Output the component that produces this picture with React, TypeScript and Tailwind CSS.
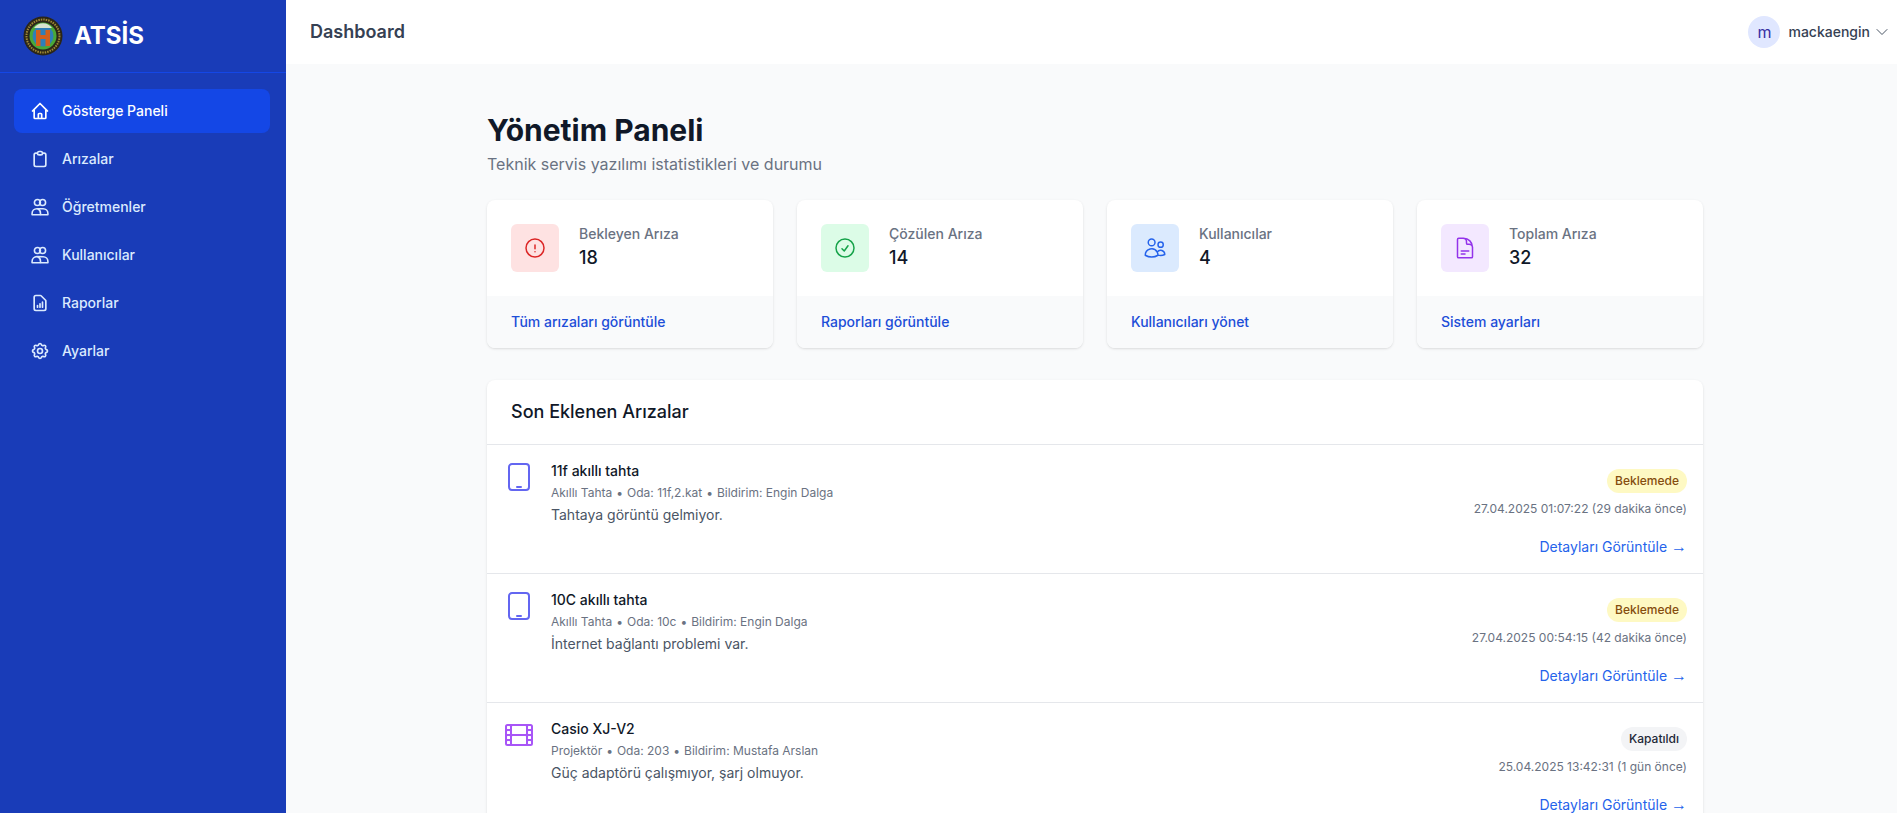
import {
  HiOutlineHome,
  HiOutlineClipboard,
  HiOutlineDocumentReport,
  HiOutlineCog,
} from 'react-icons/hi';
import {
  HiOutlineExclamationCircle,
  HiOutlineCheckCircle,
  HiOutlineUsers,
  HiOutlineDocumentText,
  HiOutlineDeviceTablet,
  HiOutlineFilm,
  HiOutlineChevronDown,
} from 'react-icons/hi2';
import type { ReactNode } from 'react';

const PeopleIcon = () => (
  <svg viewBox="0 0 24 24" fill="none" stroke="currentColor" strokeWidth="1.9" className="w-5 h-5 shrink-0" strokeLinecap="round" strokeLinejoin="round">
    <circle cx="8.9" cy="6.6" r="3.6" />
    <circle cx="15.1" cy="6.6" r="3.6" />
    <path d="M2.5 21.2v-1.4c0-3.2 2.6-5.8 5.8-5.8h7.4c3.2 0 5.8 2.6 5.8 5.8v1.4z" />
    <path d="M12.6 21v-1.6c0-2.4-1.3-4.3-3.2-5.3" />
  </svg>
);

const Logo = () => (
  <svg viewBox="0 0 40 40" className="w-10 h-10 shrink-0">
    <circle cx="20" cy="20" r="19.5" fill="#2b2618" />
    <circle cx="20" cy="20" r="16.5" fill="none" stroke="#a08a35" strokeWidth="2" strokeDasharray="1.5 1" />
    <circle cx="20" cy="20" r="13.5" fill="#4aa838" />
    <circle cx="20" cy="20" r="10.5" fill="#2f7fb8" />
    <path d="M11 12a11 11 0 0 1 18 0z" fill="#d8e4d0" />
    <path d="M13 14h4.5v5h5v-5H27v16h-4.5v-7h-5v7H13z" fill="#d2601c" />
  </svg>
);

const navItems: { label: string; icon: ReactNode; active?: boolean }[] = [
  { label: 'Gösterge Paneli', icon: <HiOutlineHome className="w-5 h-5 shrink-0" />, active: true },
  { label: 'Arızalar', icon: <HiOutlineClipboard className="w-5 h-5 shrink-0" /> },
  { label: 'Öğretmenler', icon: <PeopleIcon /> },
  { label: 'Kullanıcılar', icon: <PeopleIcon /> },
  { label: 'Raporlar', icon: <HiOutlineDocumentReport className="w-5 h-5 shrink-0" /> },
  { label: 'Ayarlar', icon: <HiOutlineCog className="w-5 h-5 shrink-0" /> },
];

const stats = [
  { label: 'Bekleyen Arıza', value: '18', link: 'Tüm arızaları görüntüle', box: 'bg-[#fee2e2] text-[#dc2626]', icon: <HiOutlineExclamationCircle className="w-6 h-6" /> },
  { label: 'Çözülen Arıza', value: '14', link: 'Raporları görüntüle', box: 'bg-[#dcfce7] text-[#16a34a]', icon: <HiOutlineCheckCircle className="w-6 h-6" /> },
  { label: 'Kullanıcılar', value: '4', link: 'Kullanıcıları yönet', box: 'bg-[#dbeafe] text-[#2563eb]', icon: <HiOutlineUsers className="w-6 h-6" /> },
  { label: 'Toplam Arıza', value: '32', link: 'Sistem ayarları', box: 'bg-[#f3e8ff] text-[#9333ea]', icon: <HiOutlineDocumentText className="w-6 h-6" /> },
];

const rows = [
  { title: '11f akıllı tahta', meta: ['Akıllı Tahta', 'Oda: 11f,2.kat', 'Bildirim: Engin Dalga'], desc: 'Tahtaya görüntü gelmiyor.', status: 'Beklemede', date: '27.04.2025 01:07:22 (29 dakika önce)', icon: <HiOutlineDeviceTablet className="w-8 h-8 shrink-0 text-[#6366f1]" /> },
  { title: '10C akıllı tahta', meta: ['Akıllı Tahta', 'Oda: 10c', 'Bildirim: Engin Dalga'], desc: 'İnternet bağlantı problemi var.', status: 'Beklemede', date: '27.04.2025 00:54:15 (42 dakika önce)', icon: <HiOutlineDeviceTablet className="w-8 h-8 shrink-0 text-[#6366f1]" /> },
  { title: 'Casio XJ-V2', meta: ['Projektör', 'Oda: 203', 'Bildirim: Mustafa Arslan'], desc: 'Güç adaptörü çalışmıyor, şarj olmuyor.', status: 'Kapatıldı', date: '25.04.2025 13:42:31 (1 gün önce)', icon: <HiOutlineFilm className="w-8 h-8 shrink-0 text-[#a855f7]" /> },
];

export default function App() {
  return (
    <div className="flex h-screen overflow-hidden bg-gray-50 font-['Inter',sans-serif]">
      {/* Sidebar */}
      <aside className="w-[286px] shrink-0 bg-blue-800 text-white">
        <div className="h-[73px] border-b border-blue-700 pl-[23px] flex items-center gap-[11px]">
          <Logo />
          <span className="text-2xl font-bold">ATSİS</span>
        </div>
        <nav className="mt-4 pl-[14px] pr-4 space-y-1">
          {navItems.map((item) => (
            <a
              key={item.label}
              className={`flex items-center gap-3 rounded-lg px-4 py-3 text-sm font-medium ${item.active ? 'bg-blue-700 text-white' : 'text-blue-100'}`}
            >
              {item.icon}
              {item.label}
            </a>
          ))}
        </nav>
      </aside>

      <div className="flex-1 min-w-0 flex flex-col">
        {/* Header */}
        <header className="h-16 shrink-0 bg-white flex items-center justify-between pl-6 pr-[7px]">
          <h2 className="text-lg font-semibold text-gray-700">Dashboard</h2>
          <div className="flex items-center">
            <div className="w-8 h-8 rounded-full bg-[#e0e7ff] text-[#3730a3] flex items-center justify-center text-base">m</div>
            <span className="ml-2 text-sm font-medium text-gray-700">mackaengin</span>
            <HiOutlineChevronDown className="ml-1 w-4 h-4 text-gray-600" />
          </div>
        </header>

        {/* Page */}
        <main className="flex-1 overflow-hidden pt-12 pl-[201px]">
          <div className="w-[1216px]">
            <h1 className="text-3xl font-bold text-gray-900">Yönetim Paneli</h1>
            <p className="mt-1 text-gray-500">Teknik servis yazılımı istatistikleri ve durumu</p>

            <div className="mt-6 grid grid-cols-4 gap-6">
              {stats.map((s) => (
                <div key={s.label} className="bg-white rounded-lg shadow overflow-hidden">
                  <div className="p-6 flex items-center">
                    <div className={`w-12 h-12 rounded-md flex items-center justify-center ${s.box}`}>{s.icon}</div>
                    <div className="ml-5">
                      <div className="text-sm font-medium text-gray-500">{s.label}</div>
                      <div className="text-lg font-medium text-gray-900">{s.value}</div>
                    </div>
                  </div>
                  <div className="bg-gray-50 px-6 py-4 text-sm font-medium text-[#1d4ed8]">{s.link}</div>
                </div>
              ))}
            </div>

            <div className="mt-8 bg-white rounded-lg shadow">
              <div className="px-6 py-5 border-b border-gray-200">
                <h3 className="text-lg leading-6 font-medium text-gray-900">Son Eklenen Arızalar</h3>
              </div>
              {rows.map((r) => (
                <div key={r.title} className="flex justify-between p-4 border-b border-gray-200">
                  <div className="flex">
                    {r.icon}
                    <div className="ml-4">
                      <div className="text-sm font-medium text-gray-900">{r.title}</div>
                      <div className="mt-1 text-xs text-gray-500 flex items-center">
                        {r.meta.map((m, i) => (
                          <span key={m}>
                            {i > 0 && <span className="mx-1">•</span>}
                            {m}
                          </span>
                        ))}
                      </div>
                      <div className="mt-1 text-sm text-gray-600">{r.desc}</div>
                    </div>
                  </div>
                  <div className="flex flex-col items-end pt-2">
                    <span className={`px-2 py-1 rounded-full text-xs font-medium ${r.status === 'Beklemede' ? 'bg-[#fef9c3] text-[#854d0e]' : 'bg-gray-100 text-gray-800'}`}>{r.status}</span>
                    <span className="mt-2 text-xs text-gray-500">{r.date}</span>
                    <a className="mt-5 text-sm text-[#2563eb]">
                      Detayları Görüntüle <span className="font-['Liberation_Sans',sans-serif] text-[16px] leading-none">→</span>
                    </a>
                  </div>
                </div>
              ))}
            </div>
          </div>
        </main>
      </div>
    </div>
  );
}
